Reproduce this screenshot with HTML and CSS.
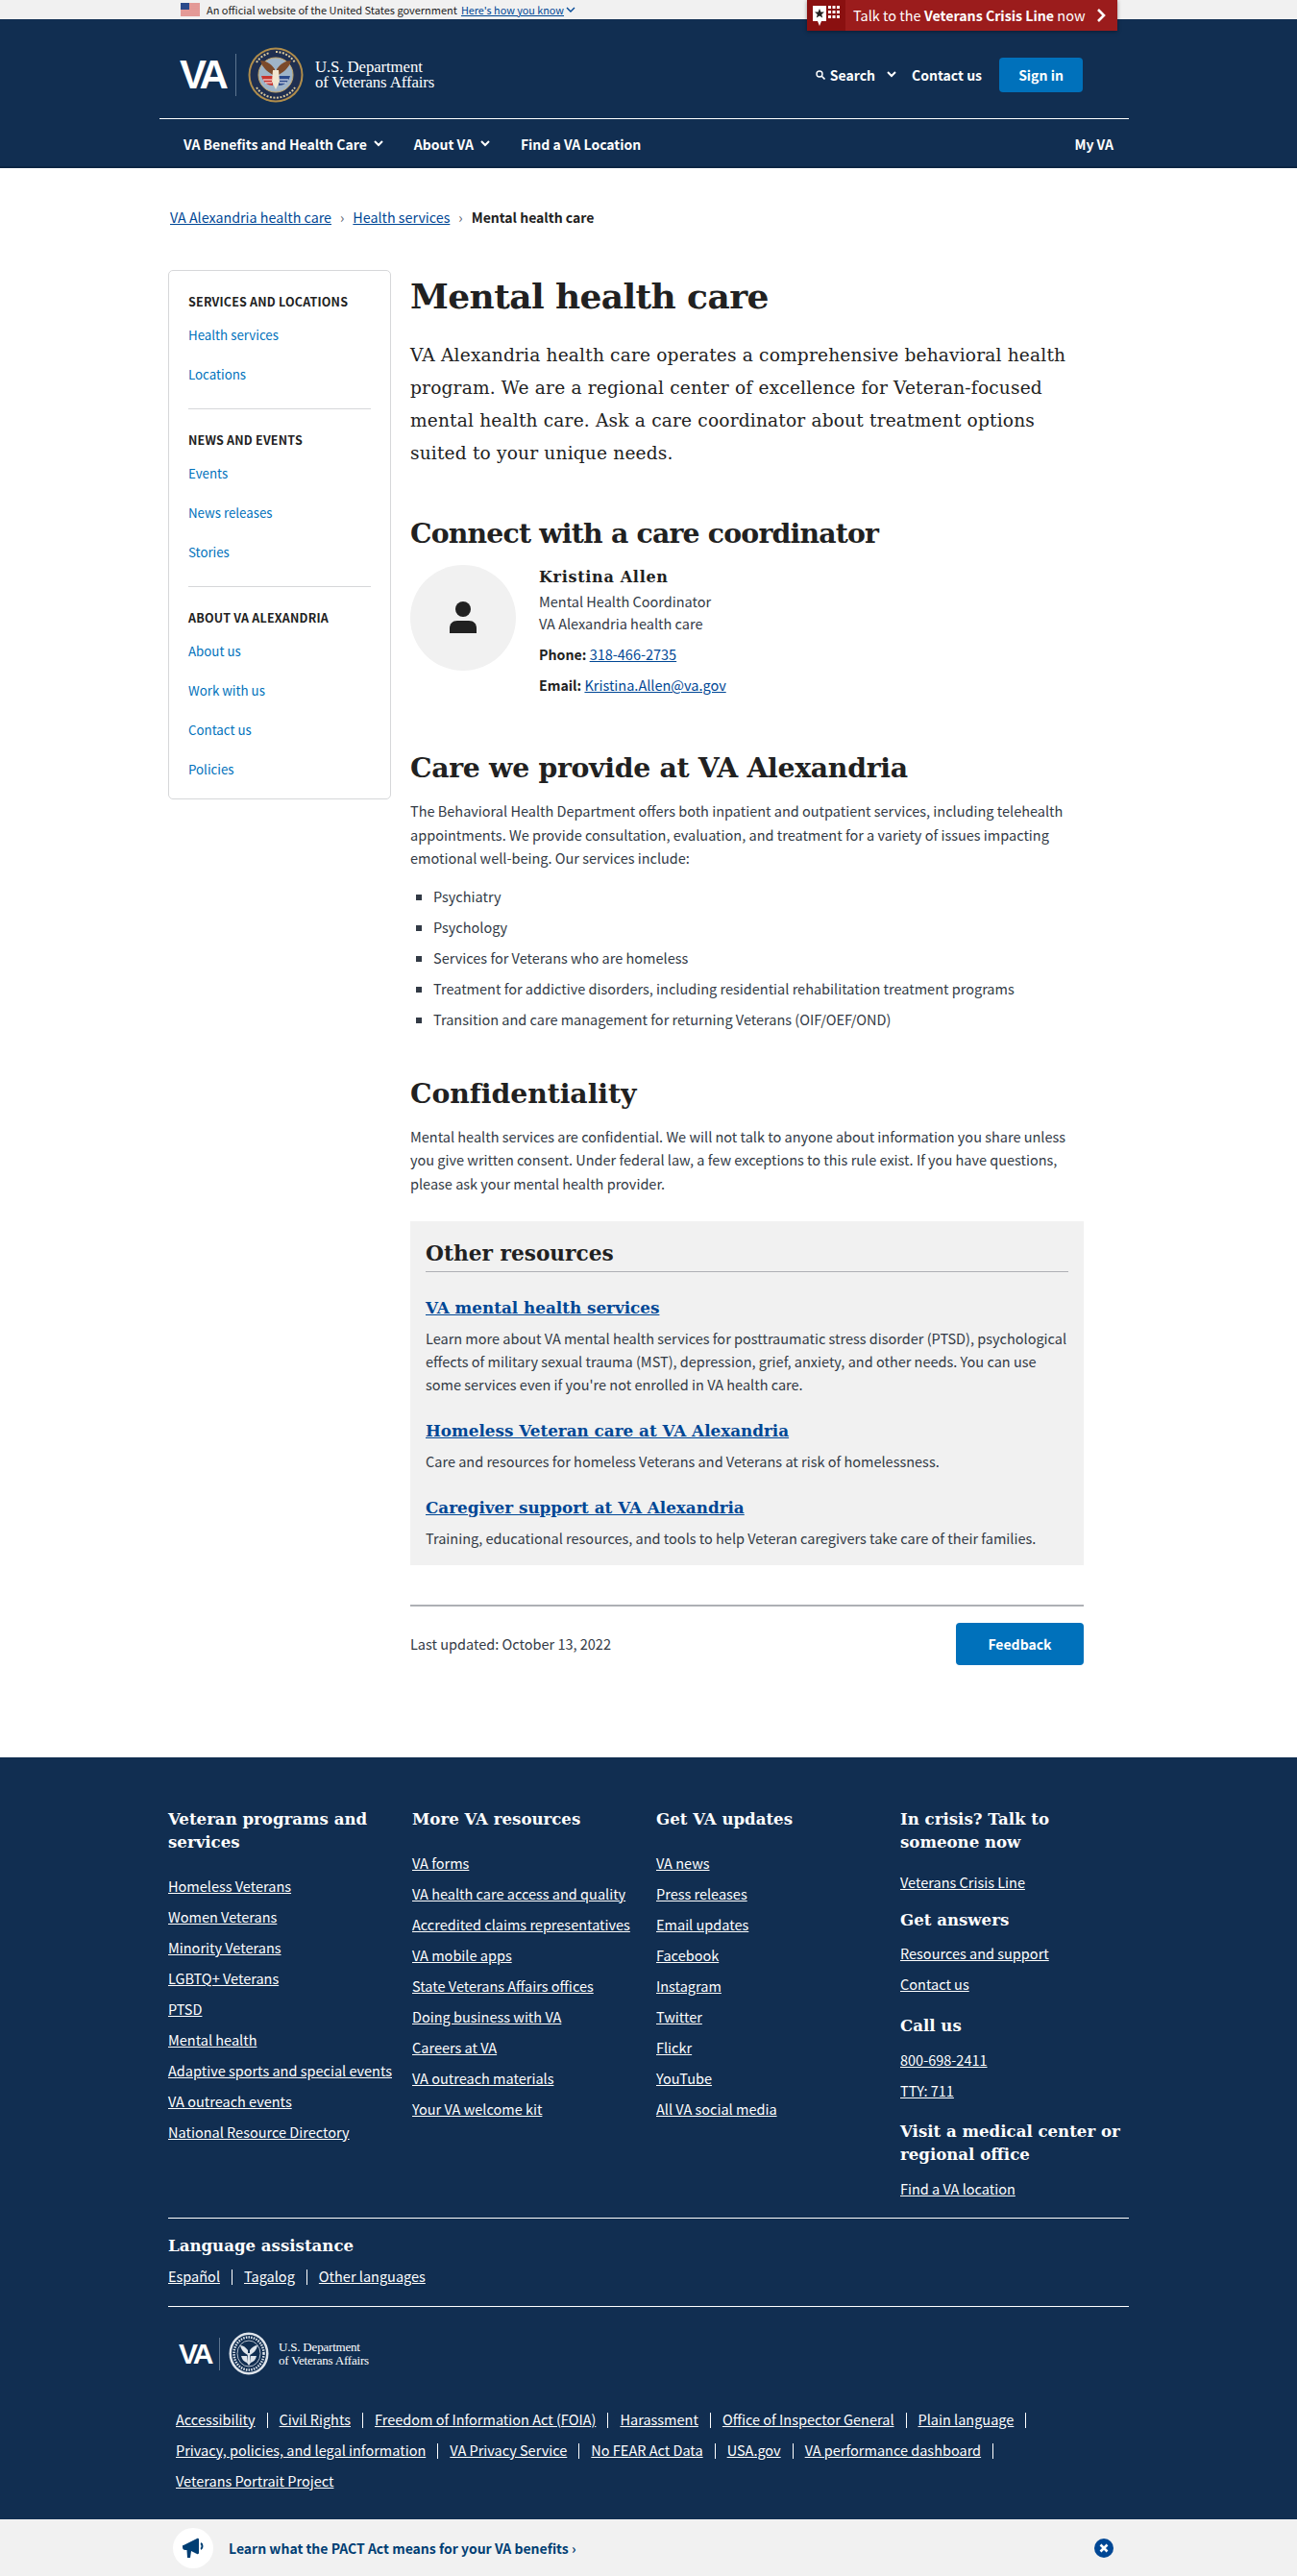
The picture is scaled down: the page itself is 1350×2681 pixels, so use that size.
FILE: index.html
```html
<!DOCTYPE html>
<html lang="en">
<head>
  <meta charset="UTF-8">
  <title>Mental health care | VA Alexandria health care</title>
  <link rel="stylesheet" href="styles.css">
</head>
<body>
  <div class="gov-banner">
    <div class="gov-inner">
      <svg class="flag" width="20" height="14" viewBox="0 0 20 14">
        <rect width="20" height="14" fill="#fff"/>
        <path d="M0 1h20M0 3h20M0 5h20M0 7h20M0 9h20M0 11h20M0 13h20" stroke="#c8352f" stroke-width="1"/>
        <rect width="9" height="7" fill="#2b4a8b"/>
      </svg>
      <span>An official website of the United States government</span>
      <a href="#" class="how">Here's how you know</a>
      <svg class="how-chev" width="10" height="7" viewBox="0 0 10 7"><path d="M1 1l4 4 4-4" fill="none" stroke="#004795" stroke-width="1.4"/></svg>
    </div>
    <a href="#" class="crisis">
      <span class="crisis-icon">
        <svg width="30" height="26" viewBox="0 0 30 26">
          <path d="M1 3h14v16h-5l-2 5-2-5H1z" fill="#fff"/>
          <path d="M8 6l1.4 3.4 3.6.2-2.8 2.3 1 3.5L8 13.5l-3.2 1.9 1-3.5L3 9.6l3.6-.2z" fill="#212121"/>
          <g fill="#fff">
            <rect x="17" y="3" width="3" height="3"/><rect x="21.5" y="3" width="3" height="3"/><rect x="26" y="3" width="3" height="3"/>
            <rect x="17" y="8" width="3" height="3"/><rect x="21.5" y="8" width="3" height="3"/><rect x="26" y="8" width="3" height="3"/>
            <rect x="17" y="13" width="3" height="3"/><rect x="21.5" y="13" width="3" height="3"/><rect x="26" y="13" width="3" height="3"/>
          </g>
        </svg>
      </span>
      <span class="crisis-text">Talk to the <b>Veterans Crisis Line</b> now</span>
      <svg class="crisis-chev" width="10" height="14" viewBox="0 0 10 14"><path d="M2 1l6 6-6 6" fill="none" stroke="#fff" stroke-width="2.6"/></svg>
    </a>
  </div>

  <header class="site-header">
    <div class="header-inner">
      <div class="header-top">
        <div class="logo">
          <span class="logo-va">VA</span>
          <span class="logo-div"></span>
          <svg class="seal" width="58" height="58" viewBox="0 0 58 58">
            <circle cx="29" cy="29" r="28.5" fill="#b08d4b"/>
            <circle cx="29" cy="29" r="26.5" fill="#1f2f50"/>
            <circle cx="29" cy="29" r="18" fill="#9fb4c8" stroke="#c9a968" stroke-width="1"/>
            <path d="M28 30C22 27 15 22 13 14c5 0 11 3 15 9z" fill="#7c4a2a"/>
            <path d="M30 30c6-3 13-8 15-16-5 0-11 3-15 9z" fill="#7c4a2a"/>
            <path d="M14 30h12v10c-5 0-10-3-12-10z" fill="#c8352f"/>
            <path d="M44 30H32v10c5 0 10-3 12-10z" fill="#2b4a8b"/>
            <path d="M16 34h9M18 37h7M33 34h9M33 37h7" stroke="#fff" stroke-width="1.2"/>
            <path d="M26 24h6l1 12-4 8-4-8z" fill="#f2e6cf"/>
            <path d="M29 5a24 24 0 0 1 20 11M9 16A24 24 0 0 1 23 6M9 42a24 24 0 0 0 40 0" fill="none" stroke="#d8c79c" stroke-width="2" stroke-dasharray="2 1.5"/>
          </svg>
          <span class="logo-name">U.S. Department<br>of Veterans Affairs</span>
        </div>
        <div class="header-actions">
          <svg class="search-icon" width="10" height="10" viewBox="0 0 10 10"><circle cx="4" cy="4" r="3" fill="none" stroke="#fff" stroke-width="1.4"/><path d="M6.3 6.3L9.5 9.5" stroke="#fff" stroke-width="1.6"/></svg>
          <a href="#" class="action search-link">Search</a>
          <svg class="chev search-chev" width="10" height="7" viewBox="0 0 10 7"><path d="M1 1l4 4 4-4" fill="none" stroke="#fff" stroke-width="2"/></svg>
          <a href="#" class="action">Contact us</a>
          <a href="#" class="signin">Sign in</a>
        </div>
      </div>
      <nav class="main-nav">
        <a href="#">VA Benefits and Health Care</a>
        <svg class="chev" width="10" height="7" viewBox="0 0 10 7"><path d="M1 1l4 4 4-4" fill="none" stroke="#fff" stroke-width="2"/></svg>
        <a href="#" class="nav-gap">About VA</a>
        <svg class="chev" width="10" height="7" viewBox="0 0 10 7"><path d="M1 1l4 4 4-4" fill="none" stroke="#fff" stroke-width="2"/></svg>
        <a href="#" class="nav-gap">Find a VA Location</a>
        <a href="#" class="my-va">My VA</a>
      </nav>
    </div>
  </header>

  <div class="breadcrumbs">
    <a href="#">VA Alexandria health care</a><span class="crumb-sep">›</span><a href="#">Health services</a><span class="crumb-sep">›</span><b>Mental health care</b>
  </div>

  <div class="content-row">
    <aside class="side-nav">
      <h4>Services and locations</h4>
      <a href="#">Health services</a>
      <a href="#">Locations</a>
      <hr>
      <h4>News and events</h4>
      <a href="#">Events</a>
      <a href="#">News releases</a>
      <a href="#">Stories</a>
      <hr>
      <h4>About VA Alexandria</h4>
      <a href="#">About us</a>
      <a href="#">Work with us</a>
      <a href="#">Contact us</a>
      <a href="#">Policies</a>
    </aside>

    <main class="main-col">
      <h1>Mental health care</h1>
      <p class="lead">VA Alexandria health care operates a comprehensive behavioral health program. We are a regional center of excellence for Veteran-focused mental health care. Ask a care coordinator about treatment options suited to your unique needs.</p>

      <h2 class="h-connect">Connect with a care coordinator</h2>
      <div class="person">
        <div class="avatar">
          <svg width="28" height="34" viewBox="0 0 28 34"><circle cx="14" cy="8" r="8" fill="#212121"/><path d="M0 33v-5c0-5 3-8 8-8h12c5 0 8 3 8 8v5z" fill="#212121"/></svg>
        </div>
        <div class="person-info">
          <div class="person-name">Kristina Allen</div>
          <div class="person-role">Mental Health Coordinator</div>
          <div class="person-role">VA Alexandria health care</div>
          <div class="person-phone"><b>Phone:</b> <a href="#">318-466-2735</a></div>
          <div class="person-email"><b>Email:</b> <a href="#">Kristina.Allen@va.gov</a></div>
        </div>
      </div>

      <h2 class="h-care">Care we provide at VA Alexandria</h2>
      <p class="body-text p-care">The Behavioral Health Department offers both inpatient and outpatient services, including telehealth appointments. We provide consultation, evaluation, and treatment for a variety of issues impacting emotional well-being. Our services include:</p>
      <ul class="services">
        <li>Psychiatry</li>
        <li>Psychology</li>
        <li>Services for Veterans who are homeless</li>
        <li>Treatment for addictive disorders, including residential rehabilitation treatment programs</li>
        <li>Transition and care management for returning Veterans (OIF/OEF/OND)</li>
      </ul>

      <h2 class="h-conf">Confidentiality</h2>
      <p class="body-text p-conf">Mental health services are confidential. We will not talk to anyone about information you share unless you give written consent. Under federal law, a few exceptions to this rule exist. If you have questions, please ask your mental health provider.</p>

      <section class="resources">
        <h3>Other resources</h3>
        <a href="#" class="res-title res-first">VA mental health services</a>
        <p>Learn more about VA mental health services for posttraumatic stress disorder (PTSD), psychological effects of military sexual trauma (MST), depression, grief, anxiety, and other needs. You can use some services even if you're not enrolled in VA health care.</p>
        <a href="#" class="res-title">Homeless Veteran care at VA Alexandria</a>
        <p>Care and resources for homeless Veterans and Veterans at risk of homelessness.</p>
        <a href="#" class="res-title">Caregiver support at VA Alexandria</a>
        <p>Training, educational resources, and tools to help Veteran caregivers take care of their families.</p>
      </section>

      <div class="page-foot">
        <span>Last updated: October 13, 2022</span>
        <a href="#" class="feedback">Feedback</a>
      </div>
    </main>
  </div>

  <footer class="site-footer">
    <div class="footer-inner">
      <div class="footer-cols">
        <div class="f-col">
          <h5>Veteran programs and services</h5>
          <a href="#">Homeless Veterans</a>
          <a href="#">Women Veterans</a>
          <a href="#">Minority Veterans</a>
          <a href="#">LGBTQ+ Veterans</a>
          <a href="#">PTSD</a>
          <a href="#">Mental health</a>
          <a href="#">Adaptive sports and special events</a>
          <a href="#">VA outreach events</a>
          <a href="#">National Resource Directory</a>
        </div>
        <div class="f-col">
          <h5>More VA resources</h5>
          <a href="#">VA forms</a>
          <a href="#">VA health care access and quality</a>
          <a href="#">Accredited claims representatives</a>
          <a href="#">VA mobile apps</a>
          <a href="#">State Veterans Affairs offices</a>
          <a href="#">Doing business with VA</a>
          <a href="#">Careers at VA</a>
          <a href="#">VA outreach materials</a>
          <a href="#">Your VA welcome kit</a>
        </div>
        <div class="f-col">
          <h5>Get VA updates</h5>
          <a href="#">VA news</a>
          <a href="#">Press releases</a>
          <a href="#">Email updates</a>
          <a href="#">Facebook</a>
          <a href="#">Instagram</a>
          <a href="#">Twitter</a>
          <a href="#">Flickr</a>
          <a href="#">YouTube</a>
          <a href="#">All VA social media</a>
        </div>
        <div class="f-col f-crisis">
          <h5 class="crisis-head">In crisis? Talk to someone now</h5>
          <a href="#" class="crisis-link">Veterans Crisis Line</a>
          <h5 class="answers">Get answers</h5>
          <a href="#">Resources and support</a>
          <a href="#">Contact us</a>
          <h5 class="call">Call us</h5>
          <a href="#">800-698-2411</a>
          <a href="#">TTY: 711</a>
          <h5 class="visit">Visit a medical center or regional office</h5>
          <a href="#">Find a VA location</a>
        </div>
      </div>

      <div class="language">
        <h5>Language assistance</h5>
        <div class="sep-links">
          <a href="#">Español</a><i></i><a href="#">Tagalog</a><i></i><a href="#">Other languages</a>
        </div>
      </div>

      <div class="footer-logo">
        <span class="flogo-va">VA</span>
        <span class="flogo-div"></span>
        <svg width="42" height="45" viewBox="0 0 42 45">
          <ellipse cx="21" cy="22.5" rx="20.5" ry="22" fill="#dfe5ec"/>
          <ellipse cx="21" cy="22.5" rx="18" ry="19.5" fill="#112e51"/>
          <ellipse cx="21" cy="22.5" rx="15.5" ry="17" fill="none" stroke="#dfe5ec" stroke-width="2.5" stroke-dasharray="1.5 1.2"/>
          <ellipse cx="21" cy="22.5" rx="12" ry="13.5" fill="none" stroke="#dfe5ec" stroke-width=".8"/>
          <path d="M20 24c-4-2-7-5-8-10 3 0 6 2 8 5zM22 24c4-2 7-5 8-10-3 0-6 2-8 5z" fill="#dfe5ec"/>
          <path d="M13 25h6v7c-3-1-5-3-6-7zM29 25h-6v7c3-1 5-3 6-7zM20 22h2l1 10-2 3-2-3z" fill="#dfe5ec"/>
        </svg>
        <span class="flogo-name">U.S. Department<br>of Veterans Affairs</span>
      </div>

      <div class="sep-links legal">
        <span><a href="#">Accessibility</a><i></i></span>
        <span><a href="#">Civil Rights</a><i></i></span>
        <span><a href="#">Freedom of Information Act (FOIA)</a><i></i></span>
        <span><a href="#">Harassment</a><i></i></span>
        <span><a href="#">Office of Inspector General</a><i></i></span>
        <span><a href="#">Plain language</a><i></i></span>
        <span><a href="#">Privacy, policies, and legal information</a><i></i></span>
        <span><a href="#">VA Privacy Service</a><i></i></span>
        <span><a href="#">No FEAR Act Data</a><i></i></span>
        <span><a href="#">USA.gov</a><i></i></span>
        <span><a href="#">VA performance dashboard</a><i></i></span>
        <span><a href="#">Veterans Portrait Project</a></span>
      </div>
    </div>
  </footer>

  <div class="promo">
    <div class="promo-icon">
      <svg width="26" height="26" viewBox="0 0 26 26">
        <path d="M3 10l14-7c1-.5 2 0 2 1v14c0 1-1 1.5-2 1l-6-3-1 7H7l-.5-8H5c-2 0-3-1-3-3s0-2 1-2z" fill="#003e73"/>
        <path d="M21 8c2 1 2 5 0 6" fill="none" stroke="#003e73" stroke-width="2"/>
      </svg>
    </div>
    <a href="#" class="promo-text">Learn what the PACT Act means for your VA benefits ›</a>
    <svg class="promo-close" width="20" height="20" viewBox="0 0 20 20"><circle cx="10" cy="10" r="10" fill="#004795"/><path d="M6.5 6.5l7 7M13.5 6.5l-7 7" stroke="#fff" stroke-width="2.6"/></svg>
  </div>
</body>
</html>
```

FILE: styles.css
```css
body {
  margin: 0;
  font-family: "Noto Sans CJK SC", "Noto Sans", sans-serif;
  font-size: 14.5px;
  line-height: 24px;
  color: #323a45;
  background: #fff;
}
a {
  color: #004795;
}
b {
  font-size: 14.2px;
}

/* top strip */
.gov-banner {
  position: relative;
  height: 20px;
  background: #f1f1f1;
}
.gov-inner {
  display: flex;
  align-items: center;
  height: 20px;
  padding-left: 188px;
  font-size: 11px;
  line-height: 20px;
  color: #212121;
}
.flag {
  margin-right: 7px;
}
.how {
  margin-left: 4px;
  font-size: 10.8px;
}
.how-chev {
  margin-left: 2px;
}
.crisis {
  position: absolute;
  top: 0;
  left: 840px;
  z-index: 2;
  display: flex;
  align-items: center;
  width: 323px;
  height: 32px;
  background: #9b1c1c;
  color: #fff;
  text-decoration: none;
  box-shadow: 0 1px 4px rgba(0, 0, 0, 0.4);
}
.crisis-icon {
  display: flex;
  align-items: center;
  justify-content: center;
  width: 40px;
  height: 32px;
  background: #8a1010;
}
.crisis-text {
  margin-left: 8px;
  font-size: 14.5px;
  white-space: nowrap;
}
.crisis-chev {
  margin-left: auto;
  margin-right: 12px;
}

/* header */
.site-header {
  height: 155px;
  background: #112e51;
  box-shadow: inset 0 -2px 0 #0c2543;
}
.header-inner {
  width: 1009px;
  margin-left: 166px;
}
.header-top {
  display: flex;
  align-items: center;
  justify-content: space-between;
  box-sizing: border-box;
  height: 104px;
  padding: 12px 48px 0 21px;
  border-bottom: 1px solid #fff;
}
.logo {
  display: flex;
  align-items: center;
  color: #fff;
}
.logo-va {
  width: 47px;
  font-family: "Liberation Sans", sans-serif;
  font-weight: 700;
  font-size: 42px;
  line-height: 44px;
  letter-spacing: -4.5px;
}
.logo-div {
  width: 1px;
  height: 44px;
  margin: 0 12px 0 11px;
  background: #5d7590;
}
.logo-name {
  margin-left: 12px;
  font-family: "Liberation Serif", serif;
  font-size: 16.8px;
  line-height: 16px;
  letter-spacing: -0.1px;
}
.header-actions {
  display: flex;
  align-items: center;
}
.action {
  color: #fff;
  font-weight: 700;
  font-size: 14px;
  text-decoration: none;
}
.search-icon {
  margin-right: 5px;
}
.search-chev {
  margin: 0 16px 0 12px;
}
.signin {
  width: 87px;
  height: 36px;
  margin-left: 18px;
  border-radius: 4px;
  background: #0071bb;
  color: #fff;
  font-weight: 700;
  font-size: 14px;
  line-height: 36px;
  text-align: center;
  text-decoration: none;
}
.main-nav {
  display: flex;
  align-items: center;
  height: 51px;
  padding: 0 16px 0 25px;
}
.main-nav a {
  color: #fff;
  font-weight: 700;
  font-size: 14px;
  text-decoration: none;
}
.main-nav .chev {
  margin-left: 7px;
}
.nav-gap {
  margin-left: 32px;
}
.my-va {
  margin-left: auto;
}

/* breadcrumbs */
.breadcrumbs {
  padding: 39px 0 0 177px;
  font-size: 14.3px;
  color: #212121;
}
.breadcrumbs b {
  font-size: 14px;
}
.crumb-sep {
  margin: 0 9px;
  color: #5b616b;
}

/* two columns */
.content-row {
  display: flex;
  margin: 43px 0 0 175px;
}
.side-nav {
  box-sizing: border-box;
  width: 232px;
  height: 551px;
  padding: 20px 20px 0;
  border: 1px solid #d6d7d9;
  border-radius: 5px;
}
.side-nav h4 {
  margin: 0;
  color: #212121;
  font-size: 12.5px;
  line-height: 24px;
  letter-spacing: 0.2px;
  text-transform: uppercase;
}
.side-nav a {
  display: block;
  margin-top: 17px;
  color: #0071bb;
  font-size: 13.3px;
  line-height: 24px;
  text-decoration: none;
}
.side-nav h4 + a {
  margin-top: 11px;
}
.side-nav hr {
  height: 1px;
  margin: 23px 0 20px;
  border: 0;
  background: #d6d7d9;
}
.main-col {
  width: 701px;
  margin-left: 20px;
}
h1, h2, h3, h5 {
  font-family: "DejaVu Serif", serif;
  font-weight: 700;
  color: #212121;
}
h1 {
  margin: 3px 0 0;
  font-size: 36px;
  line-height: 48px;
  letter-spacing: -0.6px;
}
.lead {
  margin: 21px 0 0;
  font-family: "DejaVu Serif", serif;
  font-size: 18.6px;
  line-height: 34px;
  letter-spacing: 0.17px;
  color: #212121;
}
h2 {
  font-size: 28.3px;
  line-height: 40px;
}
.h-connect {
  margin: 46px 0 0;
  letter-spacing: -0.8px;
}
.person {
  display: flex;
  margin-top: 13px;
}
.avatar {
  display: flex;
  align-items: center;
  justify-content: center;
  width: 110px;
  height: 110px;
  border-radius: 50%;
  background: #f1f1f1;
}
.person-info {
  margin-left: 24px;
}
.person-name {
  padding-top: 1px;
  font-family: "DejaVu Serif", serif;
  font-weight: 700;
  font-size: 16px;
  letter-spacing: 0.7px;
  color: #212121;
}
.person-role {
  line-height: 23px;
}
.person-role:nth-child(2) {
  margin-top: 1px;
}
.person-phone {
  margin-top: 9px;
}
.person-email {
  margin-top: 8px;
}
.person-info b {
  color: #212121;
}
.h-care {
  margin: 54px 0 0;
  letter-spacing: -0.3px;
}
.body-text {
  margin: 0;
  line-height: 24.5px;
}
.p-care {
  margin-top: 13px;
}
.services {
  margin: 15px 0 0;
  padding-left: 24px;
  list-style: square;
}
.services li {
  margin-bottom: 8px;
}
.h-conf {
  margin: 45px 0 0;
  letter-spacing: -0.07px;
}
.p-conf {
  margin-top: 13px;
}

/* other resources box */
.resources {
  box-sizing: border-box;
  height: 358px;
  margin-top: 27px;
  padding: 18px 16px 0;
  background: #f1f1f1;
}
.resources h3 {
  margin: 0;
  padding-bottom: 2px;
  border-bottom: 1px solid #aeb0b5;
  font-size: 21.7px;
  line-height: 32px;
}
.res-title {
  display: block;
  margin-top: 22px;
  font-family: "DejaVu Serif", serif;
  font-weight: 700;
  font-size: 16.8px;
  line-height: 28px;
}
.res-first {
  margin-top: 23px;
}
.resources p {
  margin: 6px 0 0;
  line-height: 24px;
}
.page-foot {
  display: flex;
  align-items: center;
  justify-content: space-between;
  margin-top: 41px;
  padding-top: 17px;
  border-top: 2px solid #aeb0b5;
}
.feedback {
  width: 133px;
  height: 44px;
  border-radius: 4px;
  background: #0071bb;
  color: #fff;
  font-weight: 700;
  font-size: 14px;
  line-height: 44px;
  text-align: center;
  text-decoration: none;
}

/* footer */
.site-footer {
  margin-top: 96px;
  padding: 52px 0 20px;
  background: #112e51;
}
.footer-inner {
  width: 1000px;
  margin-left: 175px;
}
.footer-cols {
  display: grid;
  grid-template-columns: repeat(4, 254px);
  width: 1016px;
}
.site-footer a {
  color: #fff;
}
.site-footer h5 {
  margin: 0;
  color: #fff;
  font-size: 16.6px;
  line-height: 24px;
}
.f-col a {
  display: block;
  margin-bottom: 8px;
}
.site-footer .f-col h5 {
  margin-bottom: 22px;
}
.site-footer .f-crisis .crisis-head {
  margin-bottom: 0;
  padding-right: 60px;
}
.f-crisis .crisis-link {
  margin-top: 18px;
  margin-bottom: 15px;
}
.site-footer .f-crisis .answers {
  margin-bottom: 11px;
}
.site-footer .f-crisis .call {
  margin-top: 19px;
  margin-bottom: 12px;
}
.site-footer .f-crisis .visit {
  margin-top: 18px;
  margin-bottom: 12px;
}
.language {
  margin-top: 10px;
  padding: 16px 0 19px;
  border-top: 1px solid #fff;
  border-bottom: 1px solid #fff;
}
.sep-links {
  margin-top: 8px;
}
.sep-links i {
  display: inline-block;
  width: 1px;
  height: 16px;
  margin: 0 12px;
  background: #fff;
  vertical-align: -3px;
}
.footer-logo {
  display: flex;
  align-items: center;
  height: 45px;
  margin: 26px 0 0 11px;
  color: #fff;
}
.flogo-va {
  width: 35px;
  font-family: "Liberation Sans", sans-serif;
  font-weight: 700;
  font-size: 30px;
  letter-spacing: -3px;
}
.flogo-div {
  width: 1px;
  height: 34px;
  margin: 0 9px 0 7px;
  background: #5d7590;
}
.flogo-name {
  margin-left: 10px;
  font-family: "Liberation Serif", serif;
  font-size: 13px;
  line-height: 14px;
  letter-spacing: -0.2px;
}
.legal {
  display: flex;
  flex-wrap: wrap;
  margin: 34px 0 0 8px;
}
.legal span {
  margin-bottom: 8px;
  white-space: nowrap;
}

/* bottom promo */
.promo {
  display: flex;
  align-items: center;
  box-sizing: border-box;
  height: 59px;
  padding: 0 191px 0 180px;
  background: #f1f1f1;
}
.promo-icon {
  display: flex;
  align-items: center;
  justify-content: center;
  width: 42px;
  height: 42px;
  border-radius: 50%;
  background: #fff;
}
.promo-text {
  margin-left: 16px;
  color: #003e73;
  font-weight: 700;
  font-size: 14px;
  text-decoration: none;
}
.promo-close {
  margin-left: auto;
}
```
